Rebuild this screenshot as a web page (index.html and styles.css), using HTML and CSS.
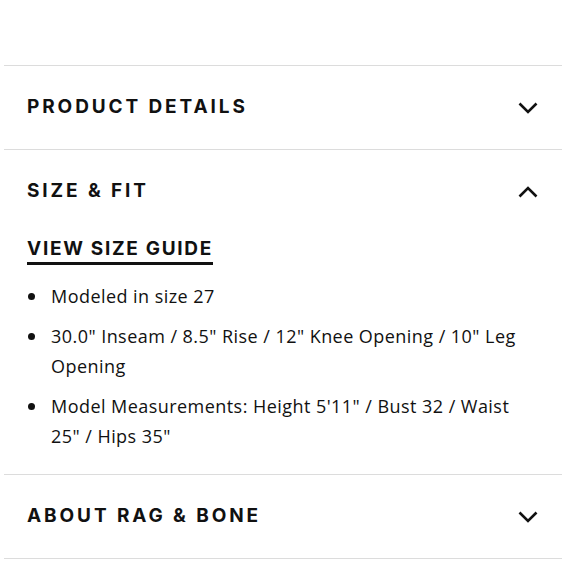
FILE: index.html
```html
<!DOCTYPE html>
<html>
<head>
<meta charset="utf-8">
<link rel="stylesheet" href="styles.css">
</head>
<body>
<div class="accordion">
  <section class="panel">
    <div class="panel-head">
      <h2 class="panel-title">PRODUCT DETAILS</h2>
      <svg class="chev" width="20" height="12" viewBox="0 0 20 12"><path d="M1.5 1.5 L10 10 L18.5 1.5" fill="none" stroke="#111" stroke-width="2.6"/></svg>
    </div>
  </section>
  <section class="panel">
    <div class="panel-head">
      <h2 class="panel-title">SIZE &amp; FIT</h2>
      <svg class="chev" width="20" height="12" viewBox="0 0 20 12"><path d="M1.5 10.5 L10 2 L18.5 10.5" fill="none" stroke="#111" stroke-width="2.6"/></svg>
    </div>
    <div class="panel-body">
      <a class="size-guide" href="#">VIEW SIZE GUIDE</a>
      <ul class="facts">
        <li>Modeled in size 27</li>
        <li>30.0" Inseam / 8.5" Rise / 12" Knee Opening / 10" Leg Opening</li>
        <li>Model Measurements: Height 5'11" / Bust 32 / Waist 25" / Hips 35"</li>
      </ul>
    </div>
  </section>
  <section class="panel">
    <div class="panel-head">
      <h2 class="panel-title">ABOUT RAG &amp; BONE</h2>
      <svg class="chev" width="20" height="12" viewBox="0 0 20 12"><path d="M1.5 1.5 L10 10 L18.5 1.5" fill="none" stroke="#111" stroke-width="2.6"/></svg>
    </div>
  </section>
</div>
</body>
</html>
```
FILE: styles.css
```css
html, body {
  margin: 0;
  padding: 0;
  background: #fff;
}
body {
  color: #111;
  font-family: "Open Sans", "Noto Sans", sans-serif;
}
.accordion {
  margin: 65px 18px 0 4px;
  border-bottom: 1px solid #dcdcdc;
}
.panel {
  border-top: 1px solid #dcdcdc;
}
.panel-head {
  height: 83px;
  display: flex;
  align-items: center;
  justify-content: space-between;
  padding: 0 24px 2px 23px;
  box-sizing: border-box;
}
.panel-title {
  margin: 0;
  font-family: "Inter", sans-serif;
  font-weight: 700;
  font-size: 19px;
  letter-spacing: 2.9px;
  color: #111;
}
.chev {
  display: block;
  margin-top: 3px;
}
.panel-body {
  padding: 0 40px 23px 23px;
}
.size-guide {
  display: inline-block;
  font-family: "Inter", sans-serif;
  font-weight: 700;
  font-size: 19px;
  letter-spacing: 1.7px;
  color: #111;
  text-decoration: none;
  border-bottom: 3px solid #111;
  line-height: 22px;
  padding-bottom: 2px;
  margin-top: 5px;
}
.facts {
  list-style: none;
  margin: 16px 0 0 0;
  padding: 0;
}
.facts li {
  position: relative;
  padding-left: 24px;
  font-size: 18px;
  letter-spacing: 0.45px;
  line-height: 30px;
  margin-bottom: 10px;
}
.facts li:last-child {
  margin-bottom: 0;
}
.facts li::before {
  content: "";
  position: absolute;
  left: 1px;
  top: 12px;
  width: 7px;
  height: 7px;
  border-radius: 50%;
  background: #111;
}
```
